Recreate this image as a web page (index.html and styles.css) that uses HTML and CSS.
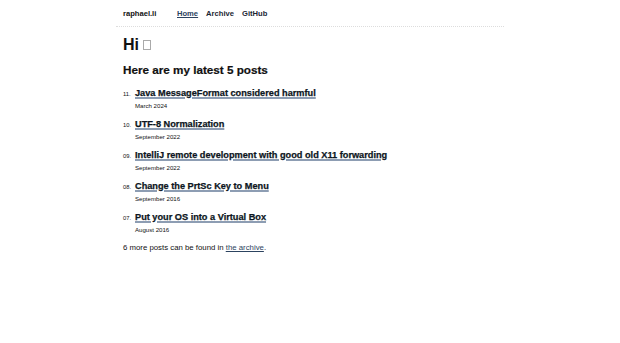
FILE: index.html
```html
<!DOCTYPE html>
<html lang="en">
<head>
    <meta charset="UTF-8">
    <meta name="viewport" content="width=device-width, initial-scale=1.0">
    <title>raphael.li</title>
    <link rel="stylesheet" href="styles.css">
</head>
<body>
    <div class="page">
        <header class="site-header">
            <a class="brand" href="#">raphael.li</a>
            <nav class="nav">
                <a class="active" href="#">Home</a>
                <a href="#">Archive</a>
                <a href="#">GitHub</a>
            </nav>
        </header>
        <main class="content">
            <h1>Hi <span class="tofu"></span></h1>
            <h2>Here are my latest 5 posts</h2>
            <ul class="posts">
                <li>
                    <div class="post-title"><span class="num">11.</span><a href="#">Java MessageFormat considered harmful</a></div>
                    <div class="date">March 2024</div>
                </li>
                <li>
                    <div class="post-title"><span class="num">10.</span><a href="#">UTF-8 Normalization</a></div>
                    <div class="date">September 2022</div>
                </li>
                <li>
                    <div class="post-title"><span class="num">09.</span><a href="#">IntelliJ remote development with good old X11 forwarding</a></div>
                    <div class="date">September 2022</div>
                </li>
                <li>
                    <div class="post-title"><span class="num">08.</span><a href="#">Change the PrtSc Key to Menu</a></div>
                    <div class="date">September 2016</div>
                </li>
                <li>
                    <div class="post-title"><span class="num">07.</span><a href="#">Put your OS into a Virtual Box</a></div>
                    <div class="date">August 2016</div>
                </li>
            </ul>
            <p class="more">6 more posts can be found in <a href="#">the archive</a>.</p>
        </main>
    </div>
</body>
</html>
```

FILE: styles.css
```css
body {
    margin: 0;
    font-family: 'Liberation Sans', Arial, sans-serif;
    font-size: 7.8px;
    color: #111;
    background: #fff;
}
a {
    color: inherit;
}
.page {
    width: 388px;
    margin: 0 auto;
}
.site-header {
    display: flex;
    align-items: center;
    height: 27px;
    padding: 0 7px;
    border-bottom: 1px dotted #ddd;
    box-sizing: border-box;
}
.brand {
    font-weight: bold;
    font-size: 7.6px;
    text-decoration: none;
    width: 54px;
}
.nav {
    display: flex;
    gap: 8px;
}
.nav a {
    text-decoration: none;
    font-size: 7.6px;
    font-weight: bold;
    color: #1b2633;
}
.nav a.active {
    text-decoration: underline;
    color: #2c4360;
}
.content {
    padding: 0 7px;
}
h1 {
    font-size: 16px;
    margin: 9px 0 0;
    line-height: 18px;
}
.tofu {
    display: inline-block;
    width: 6px;
    height: 8px;
    border: 1px solid #aaa;
    vertical-align: 0;
}
h2 {
    font-size: 11.7px;
    margin: 9px 0 0;
    line-height: 14px;
    -webkit-text-stroke: 0.2px #111;
}
.posts {
    list-style: none;
    margin: 10px 0 0;
    padding: 0;
}
.posts li {
    height: 31px;
}
.post-title {
    display: flex;
    align-items: baseline;
    line-height: 12px;
}
.num {
    font-size: 5.8px;
    width: 12px;
}
.post-title a {
    font-size: 9.2px;
    font-weight: bold;
    color: #0d1622;
    -webkit-text-stroke: 0.25px #0d1622;
    text-decoration: underline;
    text-decoration-color: #8d9db3;
    text-decoration-thickness: 2px;
    text-underline-offset: 1px;
}
.date {
    font-size: 6.1px;
    padding-left: 12px;
    line-height: 12px;
}
.more {
    margin: 1px 0 0;
    line-height: 10px;
}
.more a {
    color: #2c4360;
}
```
